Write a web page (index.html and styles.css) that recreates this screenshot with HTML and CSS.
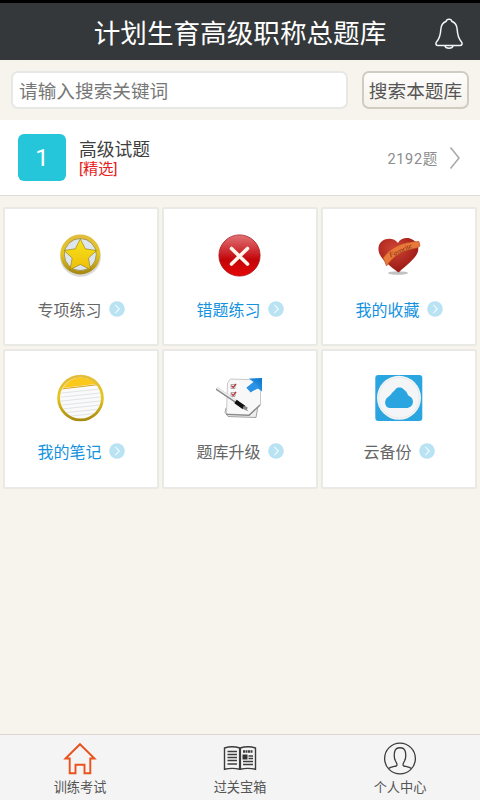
FILE: index.html
```html
<!DOCTYPE html>
<html lang="zh-CN">
<head>
<meta charset="utf-8">
<title>计划生育高级职称总题库</title>
<link rel="stylesheet" href="styles.css">
</head>
<body>
<svg width="0" height="0" class="defs">
  <defs>
    <linearGradient id="gold" x1="0" y1="0" x2="0" y2="1"><stop offset="0" stop-color="#f5e51c"/><stop offset="1" stop-color="#f0bd08"/></linearGradient>
    <linearGradient id="rim" x1="0" y1="0" x2="0" y2="1"><stop offset="0" stop-color="#e3bd3c"/><stop offset=".5" stop-color="#e5c51c"/><stop offset="1" stop-color="#a88b12"/></linearGradient>
    <linearGradient id="red" x1="0" y1="0" x2="0" y2="1"><stop offset="0" stop-color="#e07476"/><stop offset=".45" stop-color="#cb2127"/><stop offset=".6" stop-color="#c20508"/><stop offset="1" stop-color="#e50808"/></linearGradient>
    <radialGradient id="heart" cx=".4" cy=".3" r=".7"><stop offset="0" stop-color="#d04435"/><stop offset="1" stop-color="#981713"/></radialGradient>
    <linearGradient id="arrow" x1="0" y1="1" x2="1" y2="0"><stop offset="0" stop-color="#45a9ef"/><stop offset="1" stop-color="#0875d0"/></linearGradient>
    <clipPath id="noteclip"><circle cx="24" cy="24" r="20.5"/></clipPath>
    <symbol id="go" viewBox="0 0 16 16"><circle cx="8" cy="8" r="7.8" fill="#b9e2f2"/><path d="M6.3 3.8 10.3 8l-4 4.2" fill="none" stroke="#eefaff" stroke-width="1.2"/></symbol>
  </defs>
</svg>
<div class="app">
  <header class="header">
    <h1 class="title">计划生育高级职称总题库</h1>
    <svg class="bell" width="30" height="34" viewBox="0 0 30 34" fill="none" stroke="#f2f5f5" stroke-width="1.5" stroke-linejoin="round">
      <path d="M12.3 4.2c.2-2.5 5.2-2.5 5.4 0 4 1.500 5.300 4.600 5.500 8.300.3 6.500 1.600 9.500 4.300 12.500 1.300 1.500.5 3.600-1.500 3.600H4c-2 0-2.800-2.100-1.500-3.600 2.700-3 4-6 4.300-12.500.2-3.700 1.500-6.800 5.500-8.300Z"/>
      <path d="M11 28.800c.6 3.200 7.400 3.200 8 0"/>
    </svg>
  </header>
  <div class="search">
    <div class="field">请输入搜索关键词</div>
    <div class="button">搜索本题库</div>
  </div>
  <div class="entry">
    <div class="number">1</div>
    <div class="info"><div class="name">高级试题</div><div class="tag">[精选]</div></div>
    <div class="count">2192题</div>
    <svg class="chevron" width="12" height="24" viewBox="0 0 12 24"><path d="M1.500 1.500 10 12 1.500 22.500" fill="none" stroke="#aaa" stroke-width="1.600"/></svg>
  </div>
  <main class="grid">
    <section class="card">
      <svg class="icon" viewBox="0 0 48 48">
        <ellipse cx="23.500" cy="24.300" rx="20.500" ry="20.500" fill="#aaa" opacity=".45"/>
        <g transform="translate(-.7 -.5)">
        <circle cx="24" cy="23" r="18" fill="#dfe5ec" stroke="url(#rim)" stroke-width="3.800"/>
        <circle cx="24" cy="23" r="16" fill="none" stroke="#8d7b20" stroke-width=".7"/>
        <path d="M24 7.500l5 9.800 11.200 1.700-8 7.600 2 11.600L24 33l-10.200 5.200 2-11.600-8-7.600 11.200-1.700Z" fill="url(#gold)" stroke="#8b7818" stroke-width=".6"/>
        </g>
      </svg>
      <div class="label">专项练习<svg class="go"><use href="#go"/></svg></div>
    </section>
    <section class="card">
      <svg class="icon" viewBox="0 0 48 48">
        <circle cx="23.500" cy="23.500" r="20.600" fill="url(#red)" stroke="#a91518" stroke-width=".8"/>
        <path d="m15.500 16.500 16 15.500m0-15.500-16 15.500" stroke="#fff5ea" stroke-width="3.600" stroke-linecap="round"/>
      </svg>
      <div class="label blue">错题练习<svg class="go"><use href="#go"/></svg></div>
    </section>
    <section class="card">
      <svg class="icon" viewBox="0 0 48 48">
        <ellipse cx="23" cy="41" rx="10" ry="1.700" fill="#999" opacity=".6"/>
        <path d="M23 11C26.500 4 39.500 4 43 14.500c2 8-6 14-19.500 26C11.500 31.500 2.500 24.500 3.500 15.500 4.500 5.500 18.500 4 23 11Z" fill="url(#heart)"/>
        <path d="M8 26C16 15 28 9.500 44 9.500l1 4.500-3 2C29 18 19 23 11.500 34L10 30Z" fill="#e8793a" stroke="#b34a20" stroke-width=".6"/>
        <text x="15.500" y="25.500" transform="rotate(-25 15.500 25.500)" class="ribbon">Favorite</text>
      </svg>
      <div class="label blue">我的收藏<svg class="go"><use href="#go"/></svg></div>
    </section>
    <section class="card">
      <svg class="icon" viewBox="0 0 48 48">
        <circle cx="23.500" cy="24" r="22" fill="#fafafa"/>
        <g clip-path="url(#noteclip)">
          <path d="M0 0h48v9L0 14.500Z" fill="#fbc91c"/>
          <path d="M0 15.500 48 9.800" stroke="#d6a31d" stroke-width="1"/>
          <path d="M0 19.500l48-5M0 23.500l48-5M0 27.500l48-5M0 31.500l48-5M0 35.500l48-5M0 39.500l48-5M0 43.500l48-5" stroke="#dadde1" stroke-width=".8"/>
        </g>
        <circle cx="23.500" cy="24" r="21.900" fill="none" stroke="url(#rim)" stroke-width="2.800"/>
      </svg>
      <div class="label blue">我的笔记<svg class="go"><use href="#go"/></svg></div>
    </section>
    <section class="card">
      <svg class="icon" viewBox="0 0 48 48">
        <path d="M10 34 42 32l-2 11.500-28-1-3-4Z" fill="#eee" stroke="#999" stroke-width=".9"/>
        <path d="M11.500 9l3-4 30 1v25l-11 10-23-1Z" fill="#f8f8f8" stroke="#bbb" stroke-width=".8"/>
        <path d="M10 40.300l23 1 11-10.300" fill="none" stroke="#888" stroke-width="1.300"/>
        <g fill="none" stroke="#999" stroke-width=".8"><path d="M15 10.500h4v4h-4ZM15 18.500h4v4h-4Z"/><path d="m15.500 11.500 1.600 2 3-3.500M15.500 19.500l1.600 2 3-3.500" stroke="#bd3037" stroke-width="1.200"/></g>
        <path d="M.5 14.500 31 35" stroke="#888" stroke-width="3.200"/><path d="M1 14 22 28" stroke="#eee" stroke-width="1.600"/>
        <path d="m19.500 27.500 8.500 6" stroke="#111" stroke-width="4"/><path d="m28 31.500 4.500 6-6-3Z" fill="#888"/>
        <path d="M33 4.500 46 4v13.500l-4-3-7 3-4.500-3.500 7-6Z" fill="url(#arrow)"/><path d="m38 8-7.500 5.500 4 5L43 13Z" fill="#2b93e5"/>
      </svg>
      <div class="label">题库升级<svg class="go"><use href="#go"/></svg></div>
    </section>
    <section class="card">
      <svg class="icon" viewBox="0 0 48 48">
        <rect x=".3" y="1" width="47" height="46" rx="3" fill="#2ba5df"/>
        <circle cx="24" cy="23.800" r="22" fill="#f4f5f6"/>
        <circle cx="24" cy="23.800" r="20.300" fill="none" stroke="#e1e3e4" stroke-width=".7"/>
        <path d="M14.500 34C9.500 33.500 8.500 26 13 23c2.500-1.500 3.500-4 6-6 1.500-1.300 2-3.500 5.500-3.500s4.500 2.500 6 3.500c2 1.500 1.500 4 4.500 5.500 5 3 3.500 10.500-2.500 11.500Z" fill="#2ba5df"/>
      </svg>
      <div class="label">云备份<svg class="go"><use href="#go"/></svg></div>
    </section>
  </main>
  <nav class="tabs">
    <div class="tab">
      <svg width="34" height="34" viewBox="0 0 34 34"><path d="M17 2.200 31.500 16.500h-4.200v14.800h-5.800v-8.500h-9v8.500H6.700V16.500H2.500Z" fill="none" stroke="#e9521c" stroke-width="1.900"/></svg>
      <span>训练考试</span>
    </div>
    <div class="tab">
      <svg width="34" height="34" viewBox="0 0 34 34" fill="none" stroke="#3c3c3c">
        <path d="M17 6C12 4.500 6 4.500 1.500 6v21.300c5-1.200 10-1.200 15.500 0 5.500-1.200 10.500-1.200 15.500 0V6C28 4.500 22 4.500 17 6Z" stroke-width="1.400"/>
        <path d="M17 6v21.500" stroke-width="2.200"/>
        <path d="M4.500 9.500H14M4.500 12.500H14M4.500 15.500H14M4.500 18.500H14M4.500 22H14M25.500 14h4.500M25.500 16.500h4.500M20 19.500h10M20 22.500h10" stroke-width="1.300"/>
        <path d="M20 9.500h10" stroke-width="2.400" stroke-dasharray="2 .5"/><path d="M19.500 12.500h5v5h-5Z" fill="#333" stroke="none"/>
      </svg>
      <span>过关宝箱</span>
    </div>
    <div class="tab">
      <svg width="34" height="34" viewBox="0 0 34 34" fill="none" stroke="#3c3c3c" stroke-width="1.300">
        <circle cx="17" cy="16.500" r="15.400"/>
        <path d="M5.500 26.500c2-1.500 5-1.800 7.800-2.500 1.500-.8.300-3-.8-5-1.500-3-1.500-6.500-.8-9.500 1.300-5 9.300-5 10.600 0 .7 3 .7 6.500-.8 9.500-1.100 2-2.300 4.200-.8 5 2.800.7 5.800 1 7.800 2.500"/>
      </svg>
      <span>个人中心</span>
    </div>
  </nav>
</div>
</body>
</html>
```
FILE: styles.css
```css
* { box-sizing: border-box; }
body { margin: 0; font-family: Roboto, "Noto Sans CJK SC", sans-serif; color: #555; }
.defs { position: absolute; }
.app { width: 480px; height: 800px; display: flex; flex-direction: column; background: #f7f4ed; overflow: hidden; }
.header { height: 60px; flex: none; border-top: 3px solid #000; background: #34383a; display: grid; grid-template-columns: 64px 1fr 64px; align-items: center; }
.title { grid-column: 2; margin: 0; padding-top: 5px; text-align: center; font-size: 26.6px; line-height: 40px; font-weight: 400; color: #fff; white-space: nowrap; }
.bell { justify-self: center; margin: 5px 0 0 1px; }
.search { height: 60px; flex: none; display: flex; gap: 14px; padding: 11px 11px 11px; }
.field, .button { height: 38px; border-radius: 7px; font-size: 18.67px; line-height: 40px; white-space: nowrap; }
.field { width: 337px; padding-left: 6px; background: #fff; border: 2px solid #e6e8e6; line-height: 39px; color: #777; }
.button { width: 107px; text-align: center; border: 2px solid #d0ccc1; line-height: 39px; background: linear-gradient(#fefdfb, #f5f2eb); color: #555; }
.entry { height: 76px; flex: none; display: flex; align-items: center; padding: 0 19px 0 18px; background: #fff; border-bottom: 1px solid #dcdcd8; }
.number { width: 48px; height: 47px; border-radius: 6px; background: #26c6da; color: #fff; font-size: 24px; line-height: 48px; text-align: center; }
.info { margin-left: 13px; padding-top: 4px; flex: 1; }
.name { font-size: 17.8px; line-height: 20px; color: #3e3e3e; }
.tag { font-size: 15.2px; line-height: 19px; color: #e51c23; }
.count { font-size: 14.5px; letter-spacing: .7px; color: #8c8c8c; }
.chevron { margin-left: 11px; }
.grid { flex: 1; display: grid; grid-template-columns: repeat(3, 156px); grid-template-rows: 139px 140px; column-gap: 3px; row-gap: 3px; padding: 11px 3px 0; align-content: start; }
.card { background: #fff; border: 2px solid #e9eae5; border-radius: 2px; padding-top: 23px; display: flex; flex-direction: column; align-items: center; }
.icon { width: 48px; height: 48px; flex: none; }
.label { display: flex; align-items: center; gap: 7px; height: 24px; margin-top: 19px; font-size: 16px; line-height: 24px; color: #666; }
.blue { color: #1492e0; }
.go { width: 16px; height: 16px; margin-top: -5px; }
.ribbon { font: italic 7px "Liberation Serif", serif; fill: #7c2410; }
.tabs { height: 66px; flex: none; display: grid; grid-template-columns: repeat(3, 1fr); background: #f4f4f4; border-top: 1px solid #ddd7d0; }
.tab { display: flex; flex-direction: column; align-items: center; padding-top: 7px; font-size: 13.2px; line-height: 20px; color: #555; }
.tab span { margin-top: 2px; }
```
